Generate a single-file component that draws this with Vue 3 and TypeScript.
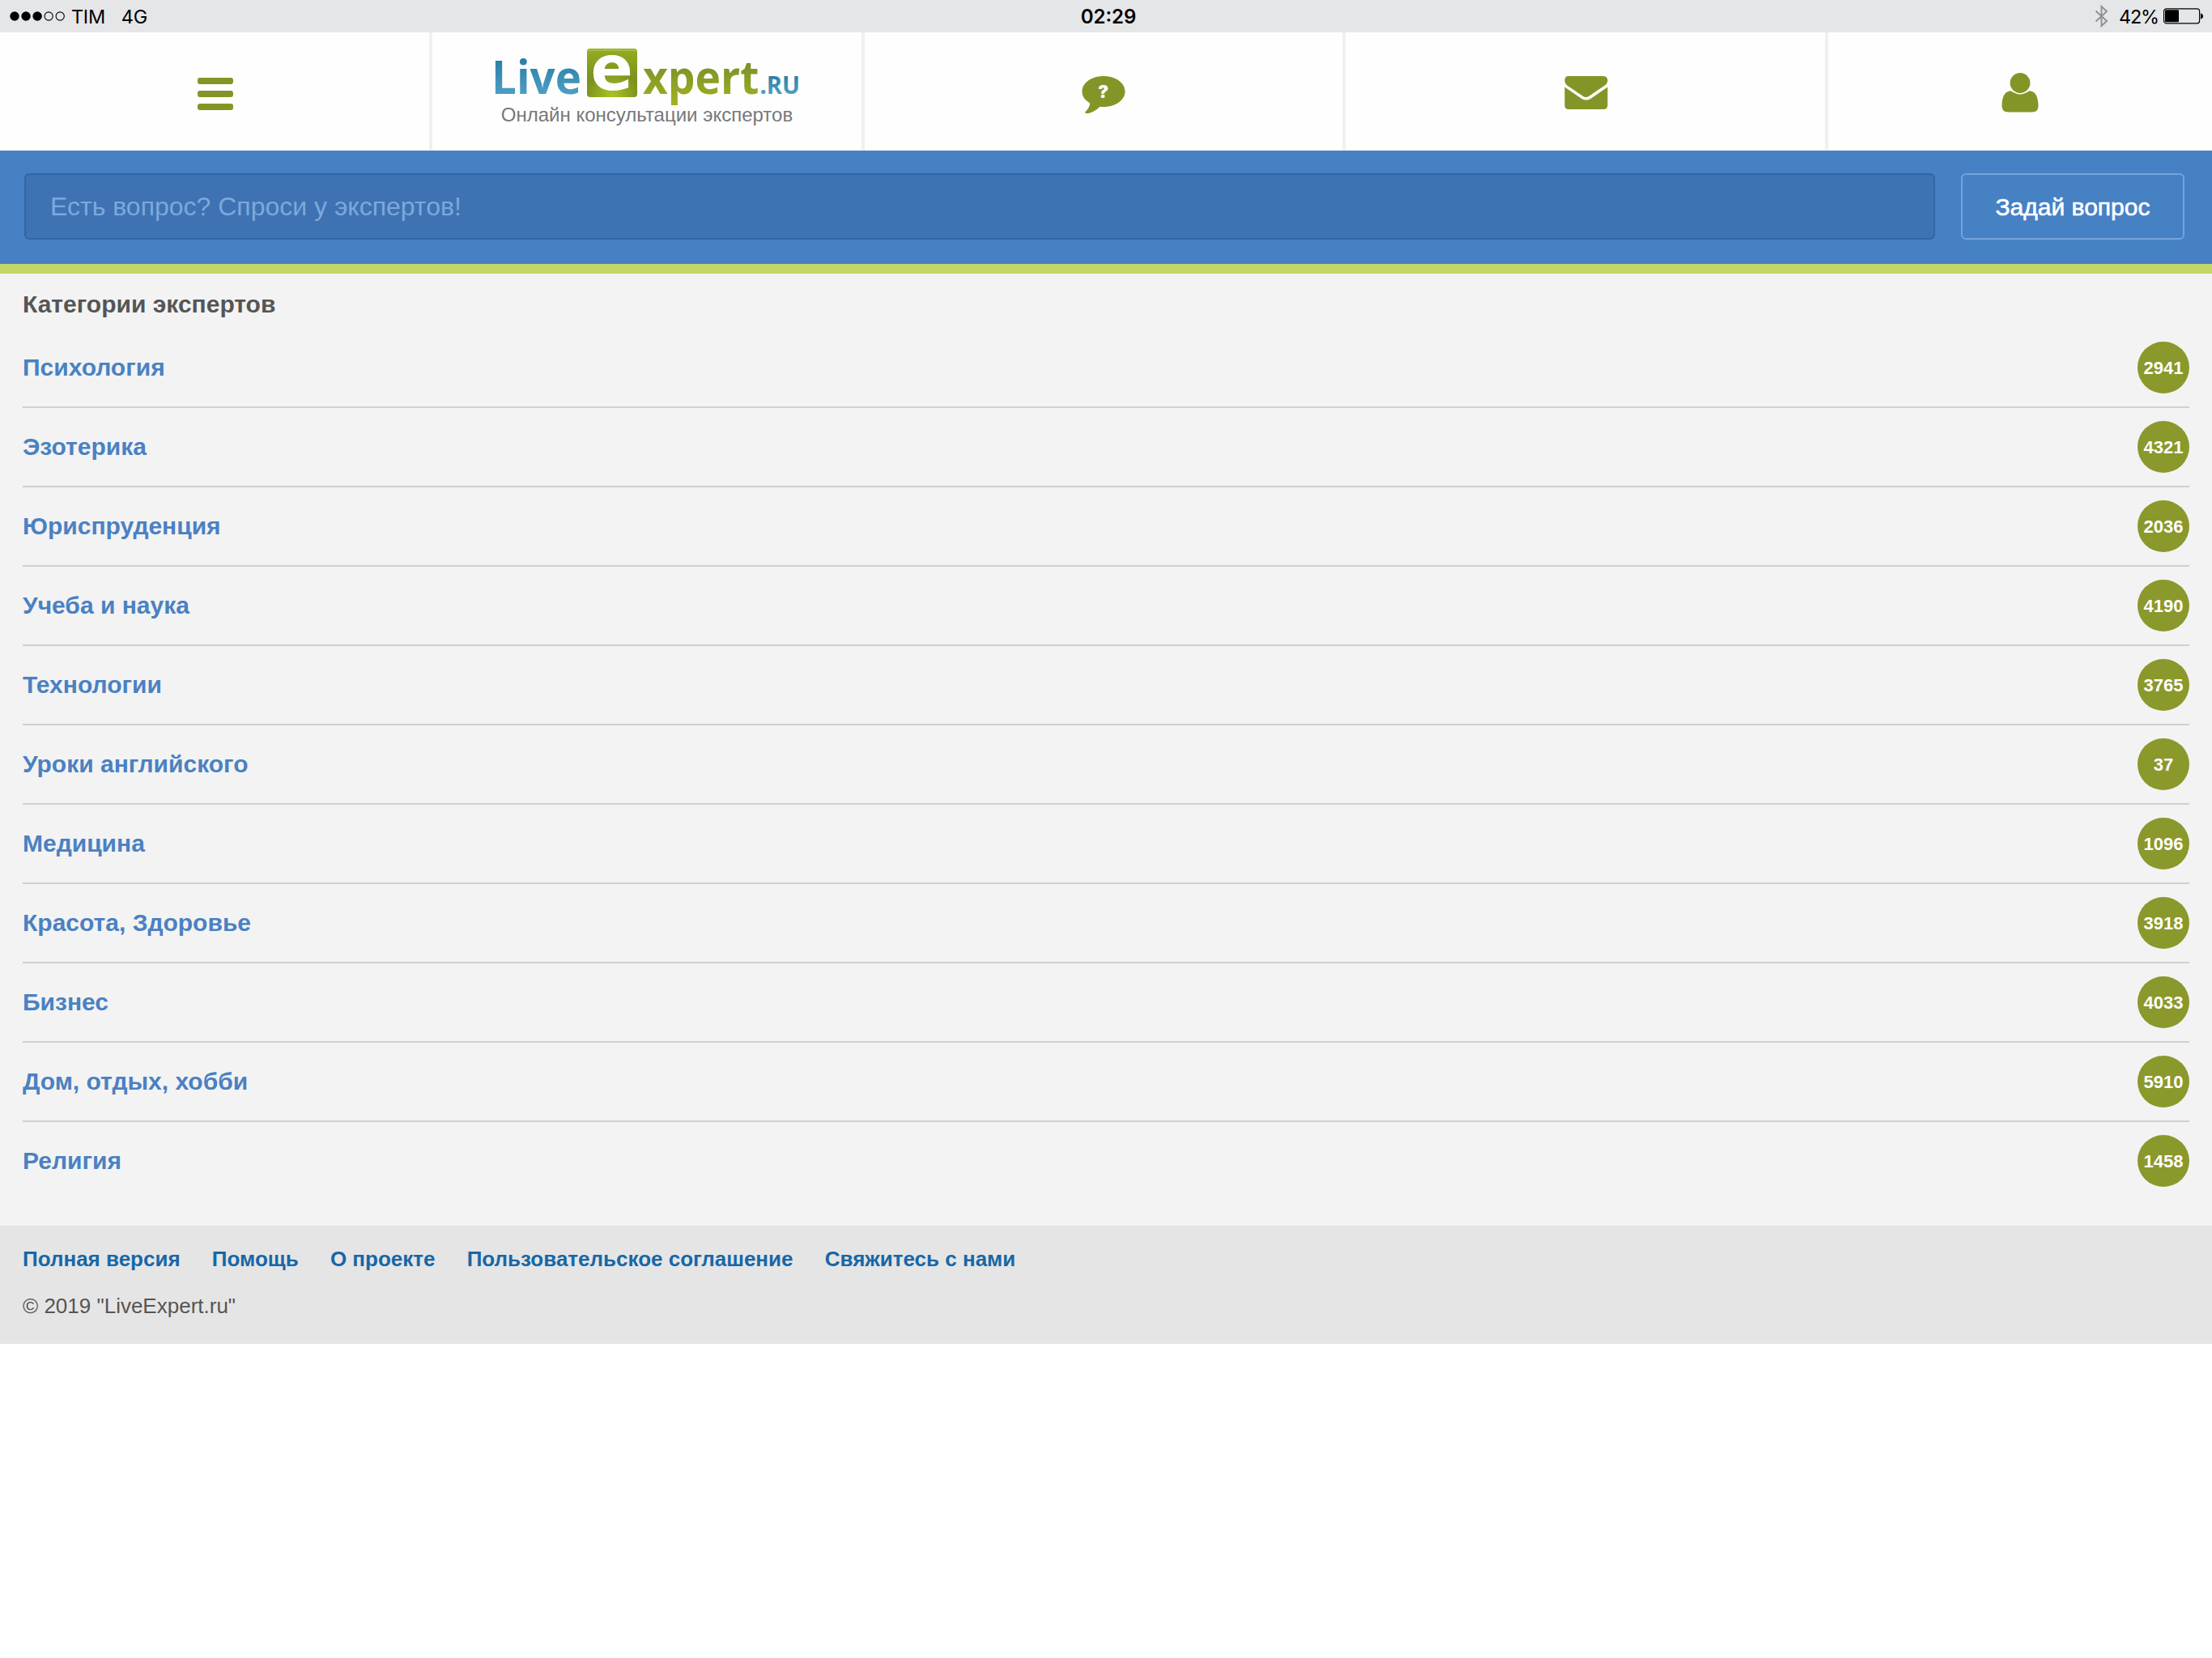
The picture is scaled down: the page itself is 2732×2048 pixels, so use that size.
<script setup lang="ts">
interface Category { name: string; count: number }

const categories: Category[] = [
  { name: 'Психология', count: 2941 },
  { name: 'Эзотерика', count: 4321 },
  { name: 'Юриспруденция', count: 2036 },
  { name: 'Учеба и наука', count: 4190 },
  { name: 'Технологии', count: 3765 },
  { name: 'Уроки английского', count: 37 },
  { name: 'Медицина', count: 1096 },
  { name: 'Красота, Здоровье', count: 3918 },
  { name: 'Бизнес', count: 4033 },
  { name: 'Дом, отдых, хобби', count: 5910 },
  { name: 'Религия', count: 1458 },
]
const links: string[] = ['Полная версия', 'Помощь', 'О проекте', 'Пользовательское соглашение', 'Свяжитесь с нами']
const dots: boolean[] = [true, true, true, false, false]
</script>

<template>
  <div class="page">
    <div class="status">
      <div class="status-side">
        <svg class="signal" width="68" height="14" viewBox="0 0 68 14">
          <circle v-for="(on, i) in dots" :key="i" :cx="6 + i * 14.05" cy="7" :r="on ? 5.7 : 5.1" :fill="on ? '#000' : 'none'" :stroke="on ? 'none' : '#000'" stroke-width="1.1" />
        </svg>
        <span class="carrier">TIM</span>
        <span class="network">4G</span>
      </div>
      <span class="clock">02:29</span>
      <div class="status-side right">
        <svg class="bt" width="17" height="28" viewBox="0 0 17 28">
          <path d="M1.5 7.500 15 20 8.500 26V2L15 8 1.500 20.500" fill="none" stroke="#919294" stroke-width="2" />
        </svg>
        <span class="percent">42%</span>
        <svg class="battery" width="50" height="20" viewBox="0 0 50 20">
          <rect x="0.6" y="0.8" width="44" height="18" rx="3" fill="none" stroke="#000" stroke-width="1.200" />
          <rect x="2" y="2.300" width="17" height="15" rx="1" fill="#000" />
          <path d="M46 6.500c2 .5 3 1.500 3 3.500s-1 3-3 3.500z" fill="#000" />
        </svg>
      </div>
    </div>

    <nav class="nav">
      <a class="cell menu">
        <svg width="44" height="40" viewBox="0 0 44 40" fill="#849528">
          <rect width="44" height="8" rx="3" />
          <rect y="16" width="44" height="8" rx="3" />
          <rect y="32" width="44" height="8" rx="3" />
        </svg>
      </a>
      <a class="cell brand">
        <svg class="logo" width="400" height="98" viewBox="599 40 400 98">
          <defs>
            <linearGradient id="blue" x1="0" y1="74" x2="0" y2="116" gradientUnits="userSpaceOnUse">
              <stop offset="0" stop-color="#2b7fa6" />
              <stop offset="1" stop-color="#4c9ec4" />
            </linearGradient>
            <linearGradient id="ru" x1="0" y1="94" x2="0" y2="116" gradientUnits="userSpaceOnUse">
              <stop offset="0" stop-color="#2b7fa6" />
              <stop offset="1" stop-color="#4c9ec4" />
            </linearGradient>
            <linearGradient id="green" x1="0" y1="76" x2="0" y2="127" gradientUnits="userSpaceOnUse">
              <stop offset="0" stop-color="#76912b" />
              <stop offset="1" stop-color="#a3af1f" />
            </linearGradient>
            <linearGradient id="tile" x1="0" y1="0" x2="0" y2="1">
              <stop offset="0" stop-color="#93ae22" />
              <stop offset=".6" stop-color="#7a921f" />
              <stop offset="1" stop-color="#7d951e" />
            </linearGradient>
            <radialGradient id="glow" cx=".5" cy=".95" r=".5">
              <stop offset="0" stop-color="#a9c322" />
              <stop offset="1" stop-color="#a9c322" stop-opacity="0" />
            </radialGradient>
          </defs>
          <text x="607" y="116" textLength="111" lengthAdjust="spacingAndGlyphs" class="word" fill="url(#blue)">Live</text>
          <rect x="725" y="60" width="62" height="60" rx="4" fill="url(#tile)" />
          <rect x="725" y="60" width="62" height="60" rx="4" fill="url(#glow)" />
          <path d="M727 64q1-2 3-2h52q2 0 3 2" fill="none" stroke="#b9cc6a" stroke-width="1" />
          <text x="729.500" y="111.300" textLength="52.300" lengthAdjust="spacingAndGlyphs" class="letter" fill="#fff">e</text>
          <text x="794" y="116" textLength="143.500" lengthAdjust="spacingAndGlyphs" class="word" fill="url(#green)">xpert</text>
          <text x="938.500" y="116" textLength="49.500" lengthAdjust="spacingAndGlyphs" class="zone" fill="url(#ru)">.RU</text>
        </svg>
        <span class="tagline">Онлайн консультации экспертов</span>
      </a>
      <a class="cell question">
        <svg width="54" height="48" viewBox="0 0 54 48">
          <path fill="#849528" d="M27 0c15 0 26.500 8.500 26.500 19S42 38 27 38q-2.500 0-4.500-.3C17 43 11 46.300 5 46q-1.500-.5-.5-2 5-4.500 5.800-10.500C4 30 .5 25 .5 19 .5 8.500 12 0 27 0z" />
          <text x="26.500" y="27.300" text-anchor="middle" class="mark" fill="#fff">?</text>
        </svg>
      </a>
      <a class="cell mail">
        <svg width="54" height="42" viewBox="0 0 54 42" fill="#849528">
          <path d="M5 0h43q5.500 0 5.500 5.500 0 3.500-3.500 6L30.500 24.700q-3.700 2.500-7.500 0L3.500 11.500Q.5 9 .5 5.500.5 0 5 0z" />
          <path d="M.5 13.500 21.500 28q5.500 3 11 0l21-14.500V36q0 5-5 5h-43q-5 0-5-5z" />
        </svg>
      </a>
      <a class="cell user">
        <svg width="46" height="50" viewBox="0 0 46 50" fill="#849528">
          <circle cx="23" cy="12.500" r="12.400" />
          <path d="M11.500 22.300q11.500 8.300 23 0C42 22.500 45.500 30 45.500 41q0 7.500-8 7.500h-29q-8 0-8-7.500C.5 30 4 22.500 11.500 22.300z" />
        </svg>
      </a>
    </nav>

    <form class="ask" @submit.prevent>
      <div class="field">Есть вопрос? Спроси у экспертов!</div>
      <button class="submit" type="submit">Задай вопрос</button>
    </form>

    <main class="content">
      <h1 class="title">Категории экспертов</h1>
      <ul class="list">
        <li v-for="c in categories" :key="c.name" class="row">
          <a class="name">{{ c.name }}</a>
          <span class="badge">{{ c.count }}</span>
        </li>
      </ul>
    </main>

    <footer class="footer">
      <div class="links"><a v-for="l in links" :key="l" class="link">{{ l }}</a></div>
      <p class="copy">© 2019 "LiveExpert.ru"</p>
    </footer>
  </div>
</template>

<style>
body { background: #fff; }
</style>

<style scoped>
.page { width: 2732px; min-height: 2048px; background: #fff; font-family: "Liberation Sans", Arial, sans-serif; }
.status { display: flex; align-items: center; height: 40px; background: #e5e6e8; font: 400 23.500px/41px Inter, sans-serif; color: #000; }
.status-side { flex: 1; display: flex; align-items: center; padding-left: 12px; }
.status-side.right { justify-content: flex-end; padding: 0 10px 0 0; }
.carrier { margin-left: 8px; letter-spacing: -0.3px; }
.network { margin-left: 20px; letter-spacing: -0.3px; }
.clock { font-size: 24px; font-weight: 600; margin-left: 4px; }
.percent { letter-spacing: -1.200px; }
.bt { margin-right: 13px; }
.battery { margin-left: 6px; }
.nav { display: flex; height: 146px; background: #fefefe; }
.cell { display: flex; box-sizing: border-box; justify-content: center; align-items: flex-start; border-right: 4px solid #f1f1ec; }
.menu { width: 534px; padding: 56px 0 0 2px; }
.brand { width: 534px; flex-direction: column; align-items: center; justify-content: flex-start; }
.logo { flex: none; overflow: visible; }
.question { width: 594px; padding-top: 54px; }
.mail { width: 596px; padding: 54px 0 0 1px; }
.user { width: 474px; padding-top: 50px; border-right: 0; }
.word { font: 700 57px "Open Sans", sans-serif; }
.letter { font: 700 76px "DejaVu Sans", sans-serif; }
.zone { font: 700 30px "Open Sans", sans-serif; }
.mark { font: 900 22px Inter, sans-serif; }
.tagline { font-size: 24px; line-height: 28px; color: #77787a; margin-top: -10px; }
.ask { display: flex; box-sizing: border-box; height: 152px; padding: 28px 34px 0 30px; gap: 32px; background: #4681c4; border-bottom: 12px solid #c0d768; }
.field { flex: 1; box-sizing: border-box; height: 82px; padding: 0 30px; border: 2px solid #2f66a8; border-radius: 6px; background: #3f72b2; color: #7ba9de; font-size: 32px; line-height: 78px; }
.submit { box-sizing: border-box; width: 276px; height: 82px; padding: 1px 0 0; border: 2px solid #74a5dc; border-radius: 6px; background: transparent; color: #fff; font: 30px/76px "Liberation Sans", Arial, sans-serif; -webkit-text-stroke: 0.6px #fff; }
.content { box-sizing: border-box; height: 1176px; padding: 0 28px; background: #f3f3f3; }
.title { margin: 0; height: 68px; font-size: 30px; line-height: 75px; color: #555; }
.list { margin: 0; padding: 0; list-style: none; }
.row { display: flex; align-items: center; justify-content: space-between; box-sizing: border-box; height: 98px; border-bottom: 2px solid #d0d0d0; }
.row:last-child { border-bottom-color: transparent; }
.name { font-size: 30px; font-weight: 700; color: #4a81c2; }
.badge { width: 64px; height: 64px; border-radius: 50%; background: #8b982b; color: #fff; font-size: 22px; font-weight: 700; line-height: 65px; text-align: center; }
.footer { box-sizing: border-box; height: 146px; padding: 24px 28px 0; background: #e5e5e5; }
.links { display: flex; gap: 39.200px; font-size: 26px; line-height: 34px; }
.link { font-weight: 700; color: #1767a8; }
.copy { margin: 24px 0 0; font-size: 26px; line-height: 34px; color: #555; }
</style>
